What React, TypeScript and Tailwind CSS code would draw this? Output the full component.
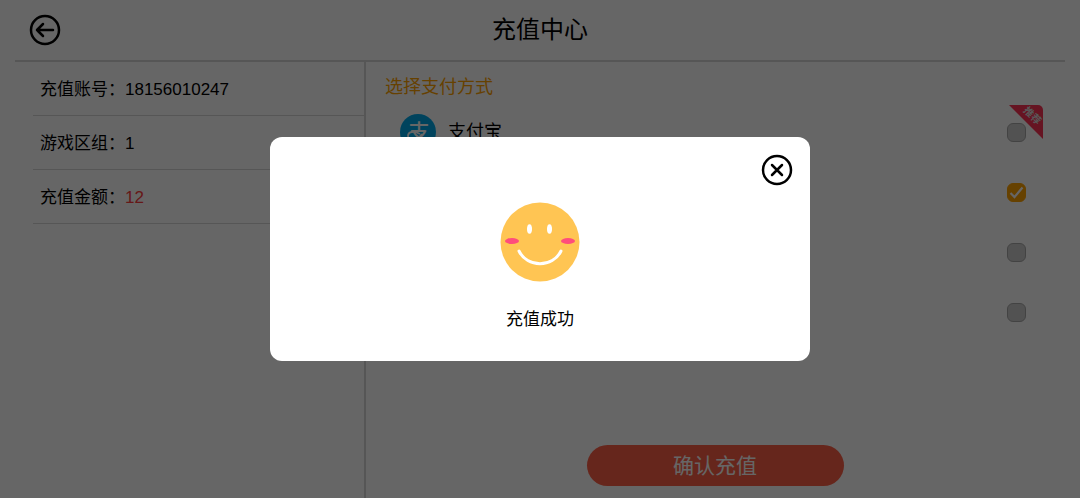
import React, { useState } from 'react';

type Field = {
  label: string;
  value: string;
  highlight?: boolean;
};

type PayMethod = {
  key: string;
  label: string;
  name?: string;
  recommended?: boolean;
};

const fields: Field[] = [
  { label: '充值账号', value: '18156010247' },
  { label: '游戏区组', value: '1' },
  { label: '充值金额', value: '12', highlight: true }
];

const payMethods: PayMethod[] = [
  { key: 'alipay', label: '支付宝', name: '支付宝', recommended: true },
  { key: 'second', label: '支付方式二' },
  { key: 'third', label: '支付方式三' },
  { key: 'fourth', label: '支付方式四' }
];

const AlipayLogo: React.FC = () => (
  <svg width="36" height="36" viewBox="0 0 36 36" aria-hidden="true">
    <circle cx="18" cy="18" r="18" fill="#00a9e9" />
    <text x="19" y="25" textAnchor="middle" fontSize="21" fontWeight="500" fill="#fff">支</text>
    <path d="M20 20c-5-3-12-3-12 2c0 5 9 5 14-2" fill="none" stroke="#fff" strokeWidth="1.800" />
  </svg>
);

const SmileFace: React.FC = () => (
  <svg width="80" height="80" viewBox="0 0 80 80" aria-hidden="true">
    <circle cx="40" cy="40" r="39.500" fill="#ffc553" />
    <ellipse cx="29.500" cy="27" rx="2.500" ry="4.800" fill="#fff" />
    <ellipse cx="49.500" cy="27" rx="2.500" ry="4.800" fill="#fff" />
    <ellipse cx="12" cy="39" rx="7" ry="3" fill="#ff4d7c" />
    <ellipse cx="68" cy="39" rx="7" ry="3" fill="#ff4d7c" />
    <path d="M19 49C27 66 53 66 61 49" fill="none" stroke="#fff" strokeWidth="3" strokeLinecap="round" />
  </svg>
);

const Ribbon: React.FC = () => (
  <span className="absolute -top-[18px] left-[2px] w-[34px] h-[34px] overflow-hidden rounded-tr-[5px] pointer-events-none">
    <svg className="absolute inset-0" width="34" height="34" viewBox="0 0 34 34" aria-hidden="true">
      <path d="M0 0h34v34z" fill="#ff3355" />
    </svg>
    <span className="absolute top-[5px] left-[13px] rotate-45 text-[10px] leading-[12px] font-bold whitespace-nowrap text-[#ddd]">推荐</span>
  </span>
);

export default function App() {
  const [selected, setSelected] = useState('second');
  const [open, setOpen] = useState(true);

  return (
    <div className="relative min-h-screen flex flex-col bg-white text-black font-['Liberation_Sans','Noto_Sans_CJK_SC',sans-serif]">
      <header className="mx-[15px] h-[62px] flex items-center border-b-2 border-[#d8d8d8]">
        <button type="button" aria-label="返回" className="ml-[14px] w-8 h-8">
          <svg width="32" height="32" viewBox="0 0 32 32" fill="none" stroke="currentColor" strokeWidth="2.500" strokeLinecap="round" strokeLinejoin="round">
            <circle cx="16" cy="16" r="14" />
            <path d="M24 16H8M14 10l-6 6l6 6" />
          </svg>
        </button>
        <h1 className="flex-1 pr-[46px] text-center text-2xl">充值中心</h1>
      </header>

      <main className="flex-1 flex">
        <dl className="w-[366px] pl-[33px] border-r-2 border-[#d8d8d8]">
          {fields.map(field => (
            <div key={field.label} className="h-[54px] pl-[7px] pt-[2px] flex items-center border-b border-[#d8d8d8] text-[17px]">
              <dt className="w-[85px]">{field.label}：</dt>
              <dd className={field.highlight ? 'text-[#ff3c3c]' : ''}>{field.value}</dd>
            </div>
          ))}
        </dl>

        <section className="flex-1 flex flex-col pl-[19px] pr-[35px] pb-3">
          <h2 className="pt-3 pb-[2px] text-lg leading-[26px] text-[#ffa200]">选择支付方式</h2>
          <ul>
            {payMethods.map(method => (
              <li key={method.key}>
                <label className="h-[60px] pl-[15px] pr-[19px] flex items-center gap-3">
                  {method.name && <AlipayLogo />}
                  {method.name && <span className="text-lg">{method.name}</span>}
                  <span className="relative ml-auto w-[19px] h-[19px]">
                    <input
                      type="checkbox"
                      aria-label={method.label}
                      checked={selected === method.key}
                      onChange={() => setSelected(method.key)}
                      className="block w-[19px] h-[19px] appearance-none rounded-md border border-[#a8a8a8] bg-[#cccccc] checked:border-[#ffa200] checked:bg-[#ffa200]"
                    />
                    {selected === method.key && (
                      <svg className="absolute inset-0 pointer-events-none" width="19" height="19" viewBox="0 0 19 19" fill="none" stroke="#fff" strokeWidth="2.200" aria-hidden="true">
                        <path d="M3.500 10l4 4l8-9.500" />
                      </svg>
                    )}
                    {method.recommended && <Ribbon />}
                  </span>
                </label>
              </li>
            ))}
          </ul>
          <button type="button" className="mt-auto self-center w-[257px] h-[41px] rounded-full bg-[#ff5f47] text-[21px] text-white">
            确认充值
          </button>
        </section>
      </main>

      {open && (
        <div className="absolute inset-0 flex items-center justify-center bg-black/60" role="dialog" aria-modal="true" aria-labelledby="result-title">
          <div className="w-1/2 px-[17px] pt-[17px] pb-[29px] flex flex-col items-center rounded-xl bg-white">
            <button type="button" aria-label="关闭" className="self-end w-8 h-8" onClick={() => setOpen(false)}>
              <svg width="32" height="32" viewBox="0 0 32 32" fill="none" stroke="currentColor" strokeWidth="2.500" strokeLinecap="round">
                <circle cx="16" cy="16" r="14" />
                <path d="M11 11l10 10M21 11l-10 10" />
              </svg>
            </button>
            <div className="mt-4">
              <SmileFace />
            </div>
            <p id="result-title" className="mt-[26px] text-[17px] leading-6">充值成功</p>
          </div>
        </div>
      )}
    </div>
  );
}
